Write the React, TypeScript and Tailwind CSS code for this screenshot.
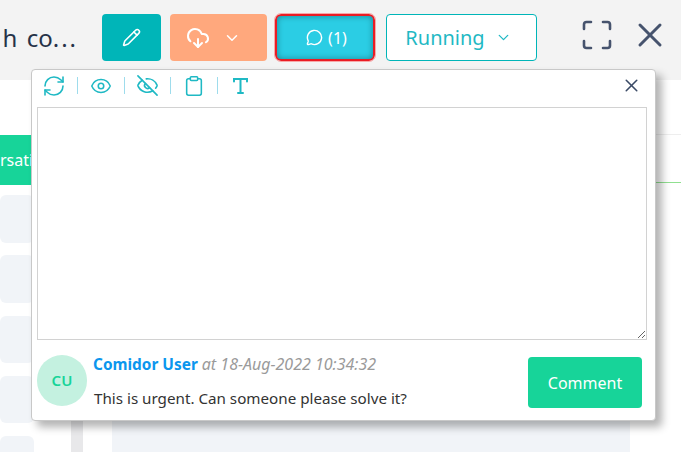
import { ChevronDown, Clipboard, CloudDownload, Eye, EyeOff, MessageCircle, Pencil, RefreshCw, X } from "lucide-react";

const listRows = ["h-[48px] mt-[10px]", "h-[48px] mt-[12px]", "h-[47px] mt-[13px]", "h-[47px] mt-[13px]", "h-[47px] mt-[13px]"];

function Separator({ className }: { className: string }) {
  return <span className={`h-[17px] w-px shrink-0 bg-[#9edcec] ${className}`} />;
}

function TypeIcon() {
  return (
    <svg width="17" height="18" viewBox="0 0 17 18" fill="none" stroke="currentColor" strokeWidth="2" strokeLinecap="round">
      <path d="M2 4.500V2h13v2.500M8.500 2v14M6 16h5" />
    </svg>
  );
}

function FullscreenIcon() {
  return (
    <svg width="30" height="30" viewBox="0 0 30 30" fill="none" stroke="#46536d" strokeWidth="2.6" strokeLinecap="round">
      <path d="M2 9V4.500A2.500 2.500 0 0 1 4.500 2H9M21 2h4.500A2.500 2.500 0 0 1 28 4.500V9M28 21v4.500a2.500 2.500 0 0 1-2.500 2.500H21M9 28H4.500A2.500 2.500 0 0 1 2 25.500V21" />
    </svg>
  );
}

export default function App() {
  return (
    <div className="relative h-[452px] w-[681px] overflow-hidden bg-white font-['Noto_Sans',sans-serif]">
      <header className="flex h-[80px] items-start bg-[#f3f3f3] pt-[14px]">
        <div className="mt-[5px] flex w-[78px] justify-end overflow-hidden whitespace-nowrap text-[24px] leading-[38px] text-[#263248] [word-spacing:3px]">
          <span className="shrink-0">
            h co<span className="tracking-[2px]">...</span>
          </span>
        </div>
        <button className="ml-[24px] flex h-[47px] w-[59px] items-center justify-center rounded bg-[#00b5b8] text-white">
          <Pencil size={19} strokeWidth={2} />
        </button>
        <button className="ml-[9px] flex h-[47px] w-[97px] items-center justify-center gap-[13px] rounded bg-[#ffa87d] pr-[10px] text-white">
          <CloudDownload size={24} strokeWidth={2} />
          <ChevronDown size={18} strokeWidth={2} />
        </button>
        <button className="ml-[8px] flex h-[47px] w-[100px] items-center justify-center gap-[5px] rounded-md border-2 border-[#ea1c24] bg-[#2bcde4] pl-[3px] text-[16px] text-white shadow-[inset_0_0_6px_rgba(0,0,0,0.35)] outline outline-1 outline-[#f7a8a8]">
          <MessageCircle size={17} strokeWidth={2} />
          (1)
        </button>
        <button className="ml-[11px] flex h-[47px] w-[151px] items-center justify-center gap-[10px] rounded border border-[#00b5b8] bg-white pr-[6px] text-[20px] text-[#1fb9c4]">
          Running
          <ChevronDown size={17} strokeWidth={1.8} />
        </button>
        <div className="ml-[45px] mt-[6px]">
          <FullscreenIcon />
        </div>
        <X className="ml-[18px] mt-[1px] shrink-0 text-[#46536d]" size={40} strokeWidth={1.8} />
      </header>

      <div className="flex h-[372px]">
        <div className="w-[34px] shrink-0">
          <div className="mt-[55px] h-[50px] bg-[#17d499] text-[16px] leading-[50px] text-white">rsati</div>
          {listRows.map((row, i) => (
            <div key={i} className={`${row} rounded-md bg-[#f1f4f8]`} />
          ))}
        </div>
        <div className="ml-[37px] w-[12px] shrink-0 bg-[#e8e8ea]" />
        <div className="ml-[29px] mt-[100px] h-[272px] w-[518px] shrink-0 bg-[#f1f4f8]" />
        <div className="flex-1">
          <div className="mt-[54px] h-px bg-[#eeeeee]" />
          <div className="mt-[47px] h-px bg-[#90e090]" />
        </div>
      </div>

      <div className="absolute left-[31px] top-[69px] flex h-[352px] w-[625px] flex-col rounded border border-[#c8c8c8] bg-white px-[5px] shadow-[6px_6px_8px_rgba(0,0,0,0.3)]">
        <div className="flex h-[37px] shrink-0 items-center pb-[6px] pl-[5px] text-[#1fb9c4]">
          <RefreshCw className="shrink-0" size={24} strokeWidth={1.6} />
          <Separator className="ml-[11px]" />
          <Eye className="ml-[12px] shrink-0" size={22} strokeWidth={1.7} />
          <Separator className="ml-[12px]" />
          <EyeOff className="ml-[11px] shrink-0" size={23} strokeWidth={1.7} />
          <Separator className="ml-[11px]" />
          <Clipboard className="ml-[12px] shrink-0" size={22} strokeWidth={1.7} />
          <Separator className="ml-[12px]" />
          <div className="ml-[14px]">
            <TypeIcon />
          </div>
          <X className="ml-auto mr-[8px] text-[#3a4a66]" size={21} strokeWidth={1.8} />
        </div>
        <textarea className="h-[233px] w-[610px] shrink-0 resize border border-[#d2d2d2] bg-white outline-none" />
        <div className="flex items-start pt-[15px]">
          <div className="flex h-[51px] w-[50px] shrink-0 items-center justify-center rounded-full bg-[#c4f1e0] text-[15px] font-semibold text-[#17d499]">
            CU
          </div>
          <div className="ml-[6px] flex-1 whitespace-nowrap">
            <div className="-mt-px text-[15.4px] leading-[20px]">
              <span className="font-bold text-[#0b96ee]">Comidor User</span>{" "}
              <span className="text-[16px] italic text-[#9a9a9a]">at 18-Aug-2022 10:34:32</span>
            </div>
            <div className="ml-[1px] mt-[13px] text-[15.2px] leading-[20px] text-[#333333]">This is urgent. Can someone please solve it?</div>
          </div>
          <button className="mr-[8px] mt-[2px] h-[51px] w-[114px] shrink-0 rounded bg-[#17d499] text-[16px] text-white">Comment</button>
        </div>
      </div>
    </div>
  );
}
